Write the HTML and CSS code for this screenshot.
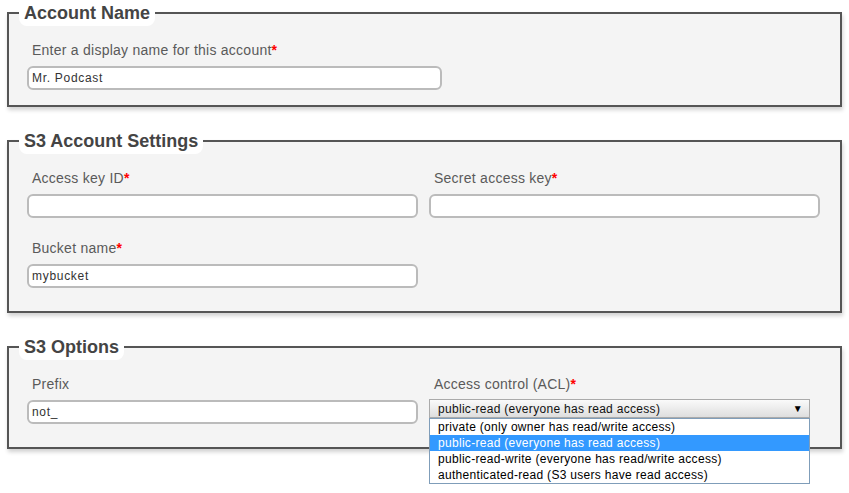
FILE: index.html
```html
<!DOCTYPE html>
<html lang="en">
<head>
  <meta charset="UTF-8">
  <title>Podcast Account - S3</title>
  <meta name="viewport" content="width=device-width, initial-scale=1.0">
  <link rel="stylesheet" href="styles.css">
</head>
<body>

  <form class="account-form">
    <fieldset>
      <legend>Account Name</legend>
      <div class="fields">
        <div class="field last">
          <label for="displayName">Enter a display name for this account<span class="req">*</span></label>
          <input type="text" id="displayName" class="wide" value="Mr. Podcast">
        </div>
      </div>
    </fieldset>

    <fieldset>
      <legend>S3 Account Settings</legend>
      <div class="fields grid">
        <div class="field">
          <label for="accessKey">Access key ID<span class="req">*</span></label>
          <input type="text" id="accessKey">
        </div>
        <div class="field">
          <label for="secretKey">Secret access key<span class="req">*</span></label>
          <input type="text" id="secretKey">
        </div>
        <div class="field">
          <label for="bucket">Bucket name<span class="req">*</span></label>
          <input type="text" id="bucket" value="mybucket">
        </div>
      </div>
    </fieldset>

    <fieldset class="options">
      <legend>S3 Options</legend>
      <div class="fields grid">
        <div class="field">
          <label for="prefix">Prefix</label>
          <input type="text" id="prefix" value="not_">
        </div>
        <div class="field">
          <label>Access control (ACL)<span class="req">*</span></label>
          <div class="select-wrap">
            <div class="select">
              <span>public-read (everyone has read access)</span>
              <span class="arrow">&#9660;</span>
            </div>
            <ul class="dropdown">
              <li>private (only owner has read/write access)</li>
              <li class="selected">public-read (everyone has read access)</li>
              <li>public-read-write (everyone has read/write access)</li>
              <li>authenticated-read (S3 users have read access)</li>
            </ul>
          </div>
        </div>
      </div>
    </fieldset>
  </form>

</body>
</html>
```

FILE: styles.css
```css
* { box-sizing: border-box; margin: 0; padding: 0; font-family: "Liberation Sans", Arial, sans-serif; }
body { background: #fff; padding: 0 7px 20px; }

fieldset {
  background: #f4f4f4;
  border: 2px solid #555;
  padding: 0 10px 15px 10px;
  margin-bottom: 21px;
  box-shadow: 1px 3px 4px rgba(0, 0, 0, 0.18);
  overflow: visible;
  position: relative;
}

fieldset.options { z-index: 2; }

legend {
  background: #fff;
  color: #444;
  font-size: 18px;
  font-weight: bold;
  line-height: 26px;
  padding: 0 5px;
  border-radius: 0 0 8px 8px;
}

.fields { padding: 16px 10px 0 8px; }

.grid {
  display: grid;
  grid-template-columns: 1fr 1fr;
  column-gap: 11px;
  row-gap: 14px;
}

.field { margin-bottom: 8px; }
.field.last { margin-bottom: 0; }

label {
  display: block;
  font-size: 14px;
  line-height: 16px;
  color: #5a5a5a;
  letter-spacing: 0.25px;
  padding-left: 5px;
  margin-bottom: 8px;
}

.req { color: #f00; font-weight: bold; letter-spacing: 0; }

input {
  display: block;
  width: 100%;
  height: 24px;
  padding: 0 3px;
  border: 2px solid #bbb;
  border-radius: 6px;
  background: #fff;
  color: #333;
  font-size: 12px;
  letter-spacing: 0.7px;
}

input.wide { width: 415px; }

.select-wrap { position: relative; width: 381px; margin-top: -1px; }

.select {
  display: flex;
  justify-content: space-between;
  align-items: center;
  height: 19px;
  padding: 0 6px 0 8px;
  border: 1px solid #aaa;
  background: linear-gradient(#fafafa, #dedede);
  color: #111;
  font-size: 12px;
  letter-spacing: 0.3px;
}

.arrow { font-size: 10px; color: #000; }

.dropdown {
  position: absolute;
  left: 0;
  right: 0;
  top: 19px;
  z-index: 5;
  list-style: none;
  background: #fff;
  border: 1px solid #7f9db9;
}

.dropdown li {
  height: 16px;
  line-height: 16px;
  padding-left: 8px;
  font-size: 12px;
  letter-spacing: 0.3px;
  color: #000;
}

.dropdown li.selected { background: #3399ff; color: #fff; }
```
